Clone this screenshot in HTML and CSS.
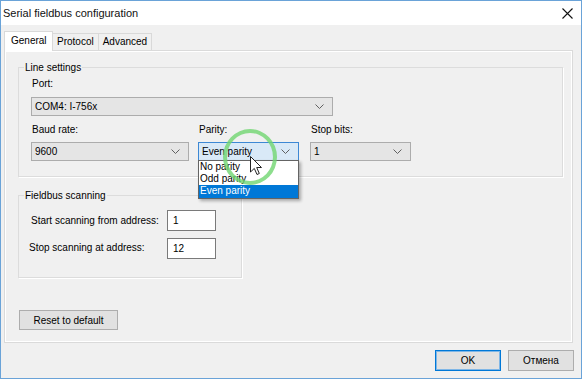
FILE: index.html
```html
<!DOCTYPE html>
<html lang="en">
<head>
    <meta charset="UTF-8">
    <meta name="viewport" content="width=device-width, initial-scale=1.0">
    <title>Serial fieldbus configuration</title>
    <link rel="stylesheet" href="styles.css">
</head>
<body>
    <div class="window">
        <div class="titlebar">
            <span class="title">Serial fieldbus configuration</span>
            <svg class="close" width="11" height="11" viewBox="0 0 11 11">
                <path d="M0.5 0.5 L10.5 10.5 M10.5 0.5 L0.5 10.5" stroke="#111" stroke-width="1.1" fill="none"/>
            </svg>
        </div>

        <div class="dialog">
            <div class="tabs">
                <div class="tab active">General</div>
                <div class="tab">Protocol</div>
                <div class="tab">Advanced</div>
            </div>

            <div class="panel">
                <fieldset class="group line-settings">
                    <legend>Line settings</legend>
                    <div class="group-body">
                        <div class="field">
                            <label>Port:</label>
                            <div class="combo port">
                                <span>COM4: I-756x</span>
                                <svg class="chevron" width="9" height="5" viewBox="0 0 9 5"><path d="M0.5 0.5 L4.5 4.5 L8.5 0.5" stroke="#606060" fill="none"/></svg>
                            </div>
                        </div>
                        <div class="field-row">
                            <div class="field">
                                <label>Baud rate:</label>
                                <div class="combo baud">
                                    <span>9600</span>
                                    <svg class="chevron" width="9" height="5" viewBox="0 0 9 5"><path d="M0.5 0.5 L4.5 4.5 L8.5 0.5" stroke="#606060" fill="none"/></svg>
                                </div>
                            </div>
                            <div class="field">
                                <label>Parity:</label>
                                <div class="combo parity">
                                    <span>Even parity</span>
                                    <svg class="chevron" width="9" height="5" viewBox="0 0 9 5"><path d="M0.5 0.5 L4.5 4.5 L8.5 0.5" stroke="#606060" fill="none"/></svg>
                                    <ul class="dropdown">
                                        <li>No parity</li>
                                        <li>Odd parity</li>
                                        <li class="selected">Even parity</li>
                                    </ul>
                                    <div class="click-ring"></div>
                                    <svg class="pointer" width="13" height="20" viewBox="0 0 13 20">
                                        <path d="M0.5 0.5 L0.5 16 L4.3 12.4 L7 18.5 L9.3 17.5 L6.7 11.5 L11.5 11.5 Z" fill="#fff" stroke="#222" stroke-width="1" stroke-linejoin="round"/>
                                    </svg>
                                </div>
                            </div>
                            <div class="field">
                                <label>Stop bits:</label>
                                <div class="combo stop">
                                    <span>1</span>
                                    <svg class="chevron" width="9" height="5" viewBox="0 0 9 5"><path d="M0.5 0.5 L4.5 4.5 L8.5 0.5" stroke="#606060" fill="none"/></svg>
                                </div>
                            </div>
                        </div>
                    </div>
                </fieldset>

                <fieldset class="group scanning">
                    <legend>Fieldbus scanning</legend>
                    <div class="group-body scan-grid">
                        <label>Start scanning from address:</label>
                        <input class="text-input" type="text" value="1">
                        <label class="stop-label">Stop scanning at address:</label>
                        <input class="text-input" type="text" value="12">
                    </div>
                </fieldset>

                <button class="btn reset">Reset to default</button>
            </div>

            <div class="footer">
                <button class="btn default">OK</button>
                <button class="btn">Отмена</button>
            </div>
        </div>
    </div>
</body>
</html>
```

FILE: styles.css
```css
body {
    margin: 0;
    background-color: #ffffff;
    font-family: 'Liberation Sans', Arial, sans-serif;
    font-size: 10px;
    color: #000;
}
.window {
    width: 582px;
    height: 379px;
    box-sizing: border-box;
    border: 1px solid #6aa3d8;
    background-color: #f0f0f0;
    display: flex;
    flex-direction: column;
}
.titlebar {
    height: 24px;
    background-color: #fff;
    display: flex;
    align-items: center;
    justify-content: space-between;
    padding: 0 8px 0 2px;
}
.title {
    font-size: 11px;
    color: #111;
}
.close {
    display: block;
}
.dialog {
    padding: 6px 7px 0 3px;
}

/* tabs */
.tabs {
    display: flex;
    align-items: flex-end;
    height: 19px;
}
.tab {
    height: 17px;
    box-sizing: border-box;
    border: 1px solid #d9d9d9;
    border-bottom: none;
    border-left: none;
    padding: 0 4px;
    line-height: 16px;
    background-color: #f0f0f0;
}
.tab.active {
    height: 20px;
    width: 49px;
    margin-bottom: -1px;
    border-left: 1px solid #d9d9d9;
    background-color: #fff;
    position: relative;
    z-index: 1;
    padding: 0 6px;
    line-height: 17px;
}
.panel {
    width: 569px;
    height: 293px;
    box-sizing: border-box;
    border: 1px solid #dadada;
    box-shadow: inset 1px 1px 0 #fff, inset -1px -1px 0 #fff;
    display: flex;
    flex-direction: column;
    align-items: flex-start;
}

/* group boxes */
.group {
    margin: 0 0 0 13px;
    padding: 0;
    min-width: 0;
    box-sizing: border-box;
    border: 1px solid #dcdcdc;
    box-shadow: 1px 1px 0 #fff;
}
.group legend {
    margin-left: 5px;
    padding: 0 1px;
    line-height: 13px;
}
.line-settings {
    width: 545px;
    margin-top: 10px;
}
.line-settings .group-body {
    padding: 3px 0 15px 12px;
}
.scanning {
    width: 224px;
    margin-top: 12px;
}
label {
    display: block;
    line-height: 13px;
    padding-left: 1px;
}
.field-row {
    display: flex;
    margin-top: 7px;
}
.field-row .field + .field {
    margin-left: 9px;
}
.field-row .field:last-child {
    margin-left: 11px;
}

/* combo boxes */
.combo {
    height: 19px;
    box-sizing: border-box;
    border: 1px solid #acacac;
    background-color: #e5e5e5;
    display: flex;
    align-items: center;
    justify-content: space-between;
    padding: 0 8px 0 3px;
    margin-top: 7px;
    position: relative;
}
.field-row .combo {
    margin-top: 6px;
}
.combo.port { width: 302px; }
.combo.baud { width: 158px; }
.combo.parity,
.combo.stop { width: 101px; }
.combo.parity {
    background-color: #d9e9f7;
    border-color: #3d88d4;
}
.chevron {
    display: block;
}
.dropdown {
    position: absolute;
    left: -1px;
    top: 17px;
    width: 101px;
    box-sizing: border-box;
    margin: 0;
    padding: 0;
    list-style: none;
    background-color: #fff;
    border: 1px solid #646464;
    box-shadow: 2px 2px 3px rgba(0, 0, 0, 0.3);
    z-index: 2;
}
.dropdown li {
    height: 12px;
    line-height: 12px;
    padding-left: 1px;
}
.dropdown li.selected {
    background-color: #0078d7;
    color: #fff;
    height: 13px;
}
.click-ring {
    position: absolute;
    left: 24px;
    top: -14px;
    width: 54px;
    height: 56px;
    box-sizing: border-box;
    border: 4px solid rgba(112, 214, 112, 0.8);
    border-radius: 50%;
    z-index: 3;
}
.pointer {
    position: absolute;
    left: 51px;
    top: 13px;
    z-index: 4;
}

/* scanning */
.scan-grid {
    display: grid;
    grid-template-columns: 137px 49px;
    row-gap: 7px;
    align-items: center;
    padding: 8px 0 18px 11px;
}
.stop-label {
    margin-left: -2px;
    margin-top: -3px;
}
.text-input {
    width: 49px;
    height: 21px;
    box-sizing: border-box;
    border: 1px solid #7a7a7a;
    background-color: #fff;
    font-family: inherit;
    font-size: 10px;
    padding: 0 5px;
}

/* buttons */
.btn {
    font-family: inherit;
    font-size: 10px;
    background-color: #e1e1e1;
    border: 1px solid #adadad;
    height: 20px;
    padding: 0;
    color: #000;
}
.reset {
    width: 99px;
    margin: 32px 0 0 14px;
}
.footer {
    display: flex;
    justify-content: flex-end;
    gap: 7px;
    margin-top: 7px;
}
.footer .btn {
    width: 66px;
    height: 21px;
}
.btn.default {
    border-color: #0078d7;
    box-shadow: inset 0 0 0 1px #7fb6e6;
}
```
